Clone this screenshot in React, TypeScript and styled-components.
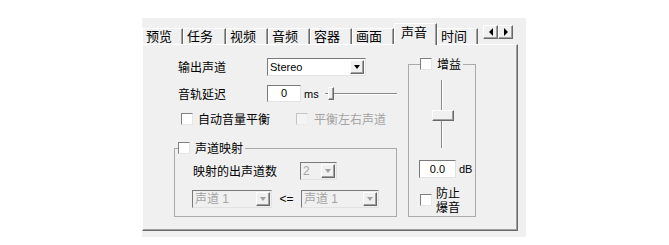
import React from 'react';
import styled, { createGlobalStyle } from 'styled-components';

const GlobalStyle = createGlobalStyle`
  html, body {
    margin: 0;
    padding: 0;
    background: #fff;
  }
  body {
    font-family: "Liberation Sans", "Noto Sans CJK SC", sans-serif;
    font-size: 12px;
    color: #000;
  }
`;

const Page = styled.div`
  padding: 18px 0 0 142px;
`;

const Window = styled.div`
  width: 384px;
  height: 219px;
  background: #f0f0f0;
`;

const TabBar = styled.div`
  display: flex;
  align-items: flex-end;
  height: 26px;
  position: relative;
  z-index: 1;
`;

const Tab = styled.div<{ $active?: boolean; $w: number }>`
  width: ${p => p.$w}px;
  box-sizing: border-box;
  height: ${p => (p.$active ? 22 : 16)}px;
  margin-bottom: ${p => (p.$active ? -1 : 0)}px;
  border-top: 1px solid #fff;
  border-left: 1px solid #fff;
  border-right: 1px solid #696969;
  box-shadow: inset -1px 0 0 #a0a0a0;
  background: #f0f0f0;
  font-family: "Noto Sans CJK SC", sans-serif;
  font-size: 13px;
  line-height: 14px;
  padding: ${p => (p.$active ? '1px 0 0 6px' : '0 0 0 3px')};
  white-space: nowrap;
`;

const Scroller = styled.div`
  display: flex;
  margin: 0 0 5px 5px;
`;

const ScrollButton = styled.div`
  width: 15px;
  height: 14px;
  box-sizing: border-box;
  border: 1px solid;
  border-color: #fff #696969 #696969 #fff;
  box-shadow: inset -1px -1px 0 #a0a0a0;
  display: flex;
  align-items: center;
  justify-content: center;
`;

const Arrow = styled.span<{ $dir: 'left' | 'right' | 'down'; $color?: string }>`
  width: 0;
  height: 0;
  border-style: solid;
  ${p =>
    p.$dir === 'left'
      ? `border-width: 4px 4px 4px 0; border-color: transparent ${p.$color || '#000'} transparent transparent;`
      : p.$dir === 'right'
      ? `border-width: 4px 0 4px 4px; border-color: transparent transparent transparent ${p.$color || '#000'};`
      : `border-width: 4px 3.5px 0 3.5px; border-color: ${p.$color || '#000'} transparent transparent transparent;`}
`;

const Panel = styled.div`
  width: 376px;
  height: 187px;
  box-sizing: border-box;
  border-top: 1px solid #fff;
  border-left: 1px solid #fff;
  border-right: 1px solid #696969;
  border-bottom: 1px solid #696969;
  box-shadow: inset -1px -1px 0 #a0a0a0;
  display: flex;
  align-items: flex-start;
  padding: 12px 0 0 31px;
`;

const LeftCol = styled.div`
  width: 223px;
  display: flex;
  flex-direction: column;
`;

const Row = styled.div<{ $top?: number; $indent?: number }>`
  display: flex;
  align-items: center;
  margin-top: ${p => p.$top || 0}px;
  padding-left: ${p => p.$indent || 0}px;
`;

const Label = styled.span<{ $w?: number; $disabled?: boolean }>`
  font-family: "Noto Sans CJK SC", sans-serif;
  font-size: 12px;
  line-height: 14px;
  color: ${p => (p.$disabled ? '#a3a3a3' : '#000')};
  ${p => (p.$w ? `width: ${p.$w}px; flex: none;` : '')}
  white-space: nowrap;
`;

const Unit = styled.span`
  font-family: "Liberation Sans", sans-serif;
  font-size: 11px;
  margin-left: 3px;
`;

const Box = styled.span<{ $disabled?: boolean }>`
  width: 12px;
  height: 12px;
  box-sizing: border-box;
  flex: none;
  border: 1px solid;
  border-color: ${p => (p.$disabled ? '#c4c4c4 #ececec #ececec #c4c4c4' : '#808080 #e6e6e6 #e6e6e6 #808080')};
  background: ${p => (p.$disabled ? '#f4f4f4' : '#fff')};
`;

const CheckLine = styled.label<{ $gap?: number }>`
  display: flex;
  align-items: center;
  gap: ${p => p.$gap || 5}px;
`;

const Combo = styled.div<{ $w: number; $disabled?: boolean }>`
  width: ${p => p.$w}px;
  height: 18px;
  box-sizing: border-box;
  flex: none;
  display: flex;
  align-items: stretch;
  border: 1px solid;
  border-color: #7a7a7a #e2e2e2 #e2e2e2 #7a7a7a;
  background: ${p => (p.$disabled ? '#f0f0f0' : '#fff')};
  padding: 1px;
`;

const ComboText = styled.span<{ $disabled?: boolean; $small?: boolean }>`
  flex: 1;
  font-family: "Liberation Sans", "Noto Sans CJK SC", sans-serif;
  font-size: ${p => (p.$small ? 11 : 12)}px;
  line-height: 14px;
  padding-left: 1px;
  color: ${p => (p.$disabled ? '#a3a3a3' : '#000')};
  white-space: nowrap;
  overflow: hidden;
`;

const DropButton = styled.span`
  width: 14px;
  flex: none;
  box-sizing: border-box;
  background: #f0f0f0;
  border: 1px solid;
  border-color: #fff #696969 #696969 #fff;
  box-shadow: inset -1px -1px 0 #a0a0a0;
  display: flex;
  align-items: center;
  justify-content: center;
`;

const Field = styled.div<{ $w: number; $h?: number }>`
  width: ${p => p.$w}px;
  height: ${p => p.$h || 17}px;
  box-sizing: border-box;
  flex: none;
  border: 1px solid;
  border-color: #7a7a7a #e2e2e2 #e2e2e2 #7a7a7a;
  background: #fff;
  font-family: "Liberation Sans", sans-serif;
  font-size: 11px;
  line-height: ${p => (p.$h || 17) - 2}px;
  text-align: center;
`;

const HSlider = styled.div`
  position: relative;
  width: 75px;
  height: 13px;
  margin-left: 6px;
  display: flex;
  align-items: center;
`;

const HTrack = styled.div`
  width: 100%;
  height: 2px;
  box-sizing: border-box;
  border-top: 1px solid #8a8a8a;
  border-bottom: 1px solid #fff;
`;

const Thumb = styled.div<{ $w: number; $h: number }>`
  position: absolute;
  width: ${p => p.$w}px;
  height: ${p => p.$h}px;
  box-sizing: border-box;
  background: #f0f0f0;
  border: 1px solid;
  border-color: #fff #696969 #696969 #fff;
  box-shadow: inset -1px -1px 0 #a0a0a0;
`;

const Group = styled.fieldset<{ $w: number }>`
  margin: 0;
  padding: 0;
  min-width: 0;
  width: ${p => p.$w}px;
  box-sizing: border-box;
  border: 1px solid #aaa;
  display: flex;
  flex-direction: column;
`;

const Legend = styled.legend<{ $left: number }>`
  margin-left: ${p => p.$left}px;
  padding: 0 2px 0 0;
  height: 14px;
  display: flex;
  align-items: center;
  gap: 5px;
`;

const RightGroup = styled(Group)`
  margin-left: 11px;
  padding-bottom: 2px;
`;

const VSlider = styled.div`
  position: relative;
  height: 68px;
  margin-top: 9px;
  display: flex;
  justify-content: center;
`;

const VTrack = styled.div`
  width: 2px;
  height: 100%;
  box-sizing: border-box;
  border-left: 1px solid #8a8a8a;
  border-right: 1px solid #fff;
`;

const TwoLine = styled.span`
  display: flex;
  flex-direction: column;
  font-family: "Noto Sans CJK SC", sans-serif;
  font-size: 12px;
  line-height: 14px;
`;

const Relation = styled.span`
  width: 29px;
  flex: none;
  text-align: center;
  font-family: "Liberation Sans", sans-serif;
  font-size: 12px;
`;

const tabs: [string, number][] = [
  ['预览', 41],
  ['任务', 43],
  ['视频', 42],
  ['音频', 42],
  ['容器', 42],
  ['画面', 42],
  ['声音', 43],
  ['时间', 41],
];

export default function App() {
  return (
    <>
      <GlobalStyle />
      <Page>
        <Window>
          <TabBar>
            {tabs.map(([name, w]) => (
              <Tab key={name} $w={w} $active={name === '声音'}>
                {name}
              </Tab>
            ))}
            <Scroller>
              <ScrollButton>
                <Arrow $dir="left" />
              </ScrollButton>
              <ScrollButton>
                <Arrow $dir="right" />
              </ScrollButton>
            </Scroller>
          </TabBar>
          <Panel>
            <LeftCol>
              <Row $top={1} $indent={4}>
                <Label $w={89}>输出声道</Label>
                <Combo $w={99}>
                  <ComboText $small>Stereo</ComboText>
                  <DropButton>
                    <Arrow $dir="down" />
                  </DropButton>
                </Combo>
              </Row>
              <Row $top={9} $indent={4}>
                <Label $w={89}>音轨延迟</Label>
                <Field $w={34}>0</Field>
                <Unit>ms</Unit>
                <HSlider>
                  <HTrack />
                  <Thumb $w={6} $h={13} style={{ left: 3, top: 0 }} />
                </HSlider>
              </Row>
              <Row $top={10} $indent={7}>
                <CheckLine>
                  <Box />
                  <Label>自动音量平衡</Label>
                </CheckLine>
                <CheckLine style={{ marginLeft: 26 }} $gap={6}>
                  <Box $disabled />
                  <Label $disabled>平衡左右声道</Label>
                </CheckLine>
              </Row>
              <Group $w={223} style={{ marginTop: 15 }}>
                <Legend $left={3}>
                  <Box />
                  <Label>声道映射</Label>
                </Legend>
                <Row $top={7} $indent={18}>
                  <Label $w={107}>映射的出声道数</Label>
                  <Combo $w={37} $disabled>
                    <ComboText $disabled>2</ComboText>
                    <DropButton>
                      <Arrow $dir="down" $color="#a0a0a0" />
                    </DropButton>
                  </Combo>
                </Row>
                <Row $top={10} $indent={17} style={{ paddingBottom: 8 }}>
                  <Combo $w={80} $disabled>
                    <ComboText $disabled>声道 1</ComboText>
                    <DropButton>
                      <Arrow $dir="down" $color="#a0a0a0" />
                    </DropButton>
                  </Combo>
                  <Relation>&lt;=</Relation>
                  <Combo $w={78} $disabled>
                    <ComboText $disabled>声道 1</ComboText>
                    <DropButton>
                      <Arrow $dir="down" $color="#a0a0a0" />
                    </DropButton>
                  </Combo>
                </Row>
              </Group>
            </LeftCol>
            <RightGroup $w={68}>
              <Legend $left={11}>
                <Box />
                <Label>增益</Label>
              </Legend>
              <VSlider>
                <VTrack />
                <Thumb $w={22} $h={11} style={{ top: 30, left: 23 }} />
              </VSlider>
              <Row $top={12} $indent={10}>
                <Field $w={37} $h={18}>0.0</Field>
                <Unit>dB</Unit>
              </Row>
              <Row $top={8} $indent={11}>
                <CheckLine $gap={4}>
                  <Box />
                  <TwoLine>
                    <span>防止</span>
                    <span>爆音</span>
                  </TwoLine>
                </CheckLine>
              </Row>
            </RightGroup>
          </Panel>
        </Window>
      </Page>
    </>
  );
}
